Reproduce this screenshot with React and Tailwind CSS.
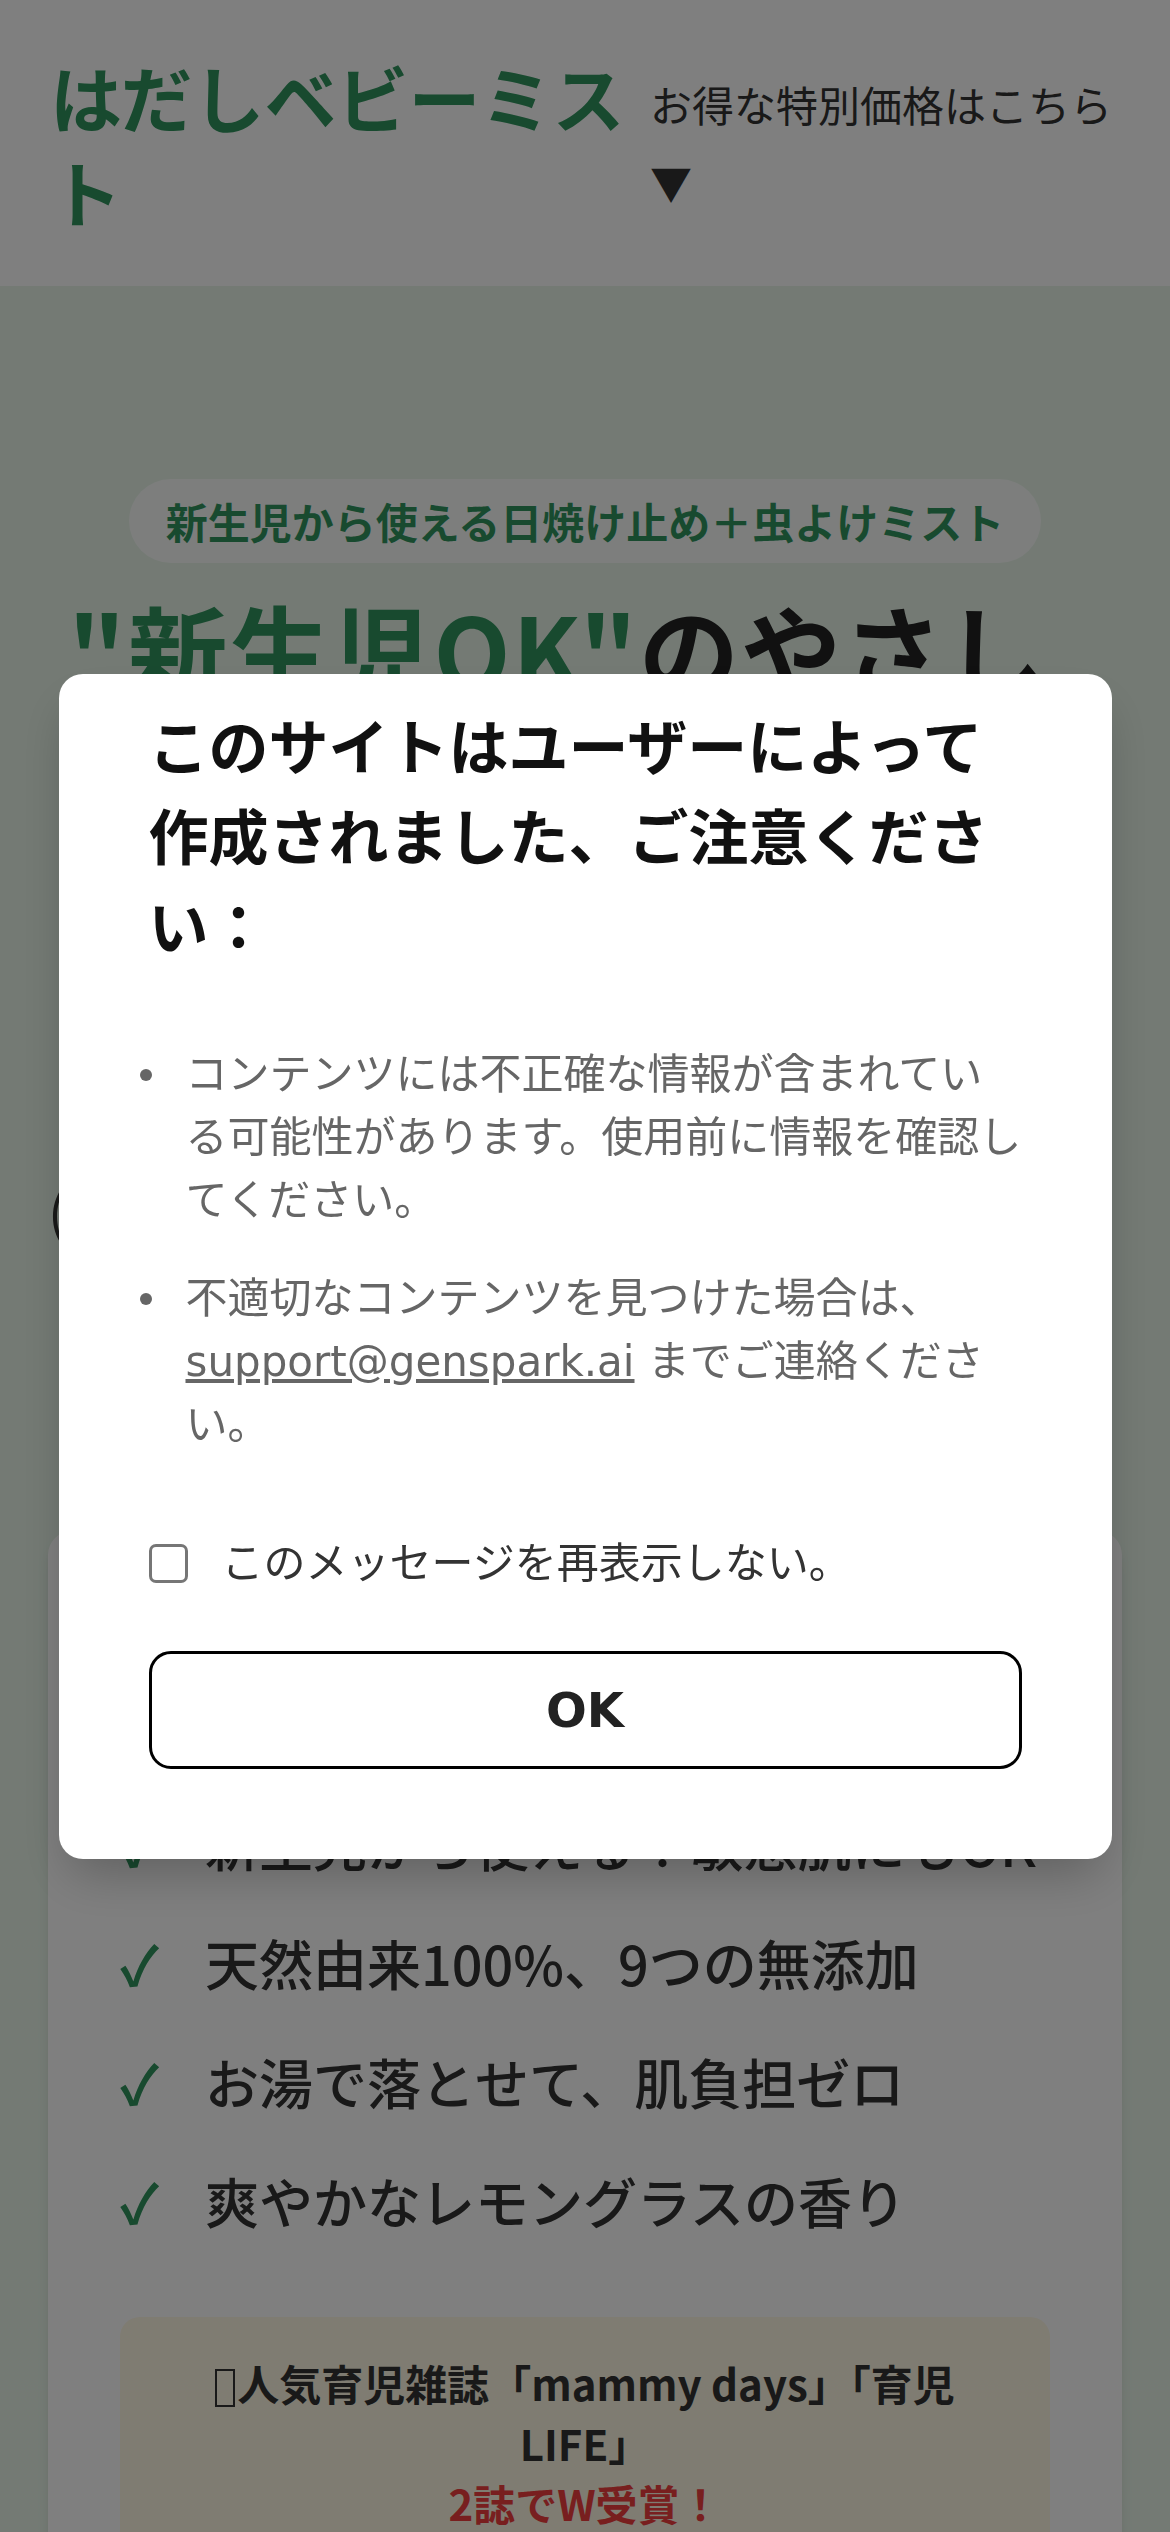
import React from "react";

const GREEN = "text-[#31955f]";

const features = [
  "新生児から使える！敏感肌にもOK",
  "天然由来100%、9つの無添加",
  "お湯で落とせて、肌負担ゼロ",
  "爽やかなレモングラスの香り",
];

const NoticeModal = () => (
  <div className="fixed inset-0 z-50 flex items-center justify-center bg-black/50">
    <div className="w-[90%] rounded-[24px] bg-white px-[90px] pt-[30px] pb-[90px] shadow-2xl font-['DejaVu_Sans','Noto_Sans_CJK_JP',sans-serif]">
      <h2 className="text-[60px] leading-[90px] font-bold text-[#111]">
        このサイトはユーザーによって作成されました、ご注意ください：
      </h2>

      <ul className="mt-[69px] -ml-[9px] flex flex-col gap-[35px] text-[42px] leading-[63px] text-[#666]">
        <li className="flex whitespace-nowrap">
          <span className="w-[46px] shrink-0 pt-[26px]">
            <span className="block h-[12px] w-[12px] rounded-full bg-[#666]" />
          </span>
          <span>
            コンテンツには不正確な情報が含まれてい
            <br />
            る可能性があります。使用前に情報を確認し
            <br />
            てください。
          </span>
        </li>
        <li className="flex whitespace-nowrap">
          <span className="w-[46px] shrink-0 pt-[26px]">
            <span className="block h-[12px] w-[12px] rounded-full bg-[#666]" />
          </span>
          <span>
            不適切なコンテンツを見つけた場合は、
            <br />
            <a href="#" className="underline">
              support@genspark.ai
            </a>{" "}
            までご連絡くださ
            <br />
            い。
          </span>
        </li>
      </ul>

      <label className="mt-[76px] flex items-center gap-[34px] text-[42px] leading-[63px] text-[#333]">
        <input
          type="checkbox"
          className="h-[39px] w-[39px] shrink-0 appearance-none rounded-[7px] border-[3px] border-[#767676] bg-white"
        />
        このメッセージを再表示しない。
      </label>

      <button className="mt-[56px] h-[118px] w-full rounded-[22px] border-[3px] border-black bg-white text-[48px] font-bold text-[#222]">
        OK
      </button>
    </div>
  </div>
);

export default function App() {
  return (
    <div className="min-h-screen bg-[#e8f5e9] font-['Noto_Sans_CJK_JP',sans-serif] text-[#333]">
      {/* Header */}
      <header className="flex items-center justify-between gap-[16px] bg-white pl-[50px] pr-[55px] py-[48px]">
        <div className={`flex-1 text-[72px] leading-[95px] font-bold ${GREEN}`}>
          はだしベビーミスト
        </div>
        <a href="#" className="w-[465px] shrink-0 text-[42px] leading-[78px] text-[#333]">
          お得な特別価格はこちら ▼
        </a>
      </header>

      {/* Hero */}
      <section className="px-[48px] pt-[193px] pb-[120px]">
        <div className="flex justify-center">
          <span className={`rounded-full bg-white/80 px-[37px] py-[10px] text-[42px] leading-[64px] font-bold ${GREEN}`}>
            新生児から使える日焼け止め＋虫よけミスト
          </span>
        </div>

        <h1 className="mt-[20px] pl-[20px] text-[100px] leading-[130px] font-bold tracking-[2px] text-[#222]">
          <span className={GREEN}>"新生児OK"</span>のやさしさで、肌を守る
        </h1>

        <p className="mt-[30px] text-center text-[54px] leading-[86px] text-[#444]">
          紫外線と虫から、
          <br />
          赤ちゃんのお肌をやさしく
          <br />
          ひと吹きでしっかりガード
        </p>
        <p className="mt-[36px] text-[54px] leading-[86px] font-normal text-[#333]">
          (生後0ヶ月から毎日使える)
        </p>

        {/* Features card */}
        <div className="mt-[278px] rounded-[24px] bg-white px-[72px] pt-[72px] pb-[80px] shadow-lg">
          <h2 className={`text-center text-[60px] leading-[90px] font-bold ${GREEN}`}>
            はだしベビーミストの特徴
          </h2>

          <ul className="mt-[108px] flex flex-col gap-[33px]">
            {features.map((f) => (
              <li key={f} className="flex text-[54px] leading-[86px] font-medium text-[#333]">
                <span className={`w-[85px] shrink-0 font-bold ${GREEN}`}>✓</span>
                <span>{f}</span>
              </li>
            ))}
          </ul>

          <div className="mt-[73px] rounded-[20px] bg-[#fef8e4] px-[60px] pt-[36px] pb-[40px] text-center text-[42px] leading-[60px] font-bold text-[#333]">
            <p>
              <span className="mr-[2px] inline-block h-[38px] w-[20px] border-2 border-[#333] align-[-6px]" />
              人気育児雑誌「mammy days」「育児LIFE」
            </p>
            <p className="text-[#f03e3e]">2誌でW受賞！</p>
            <p className="mt-[20px] text-[36px] leading-[54px] font-normal text-[#555]">
              ママたちに選ばれる安心の品質です
            </p>
          </div>
        </div>
      </section>

      <NoticeModal />
    </div>
  );
}
